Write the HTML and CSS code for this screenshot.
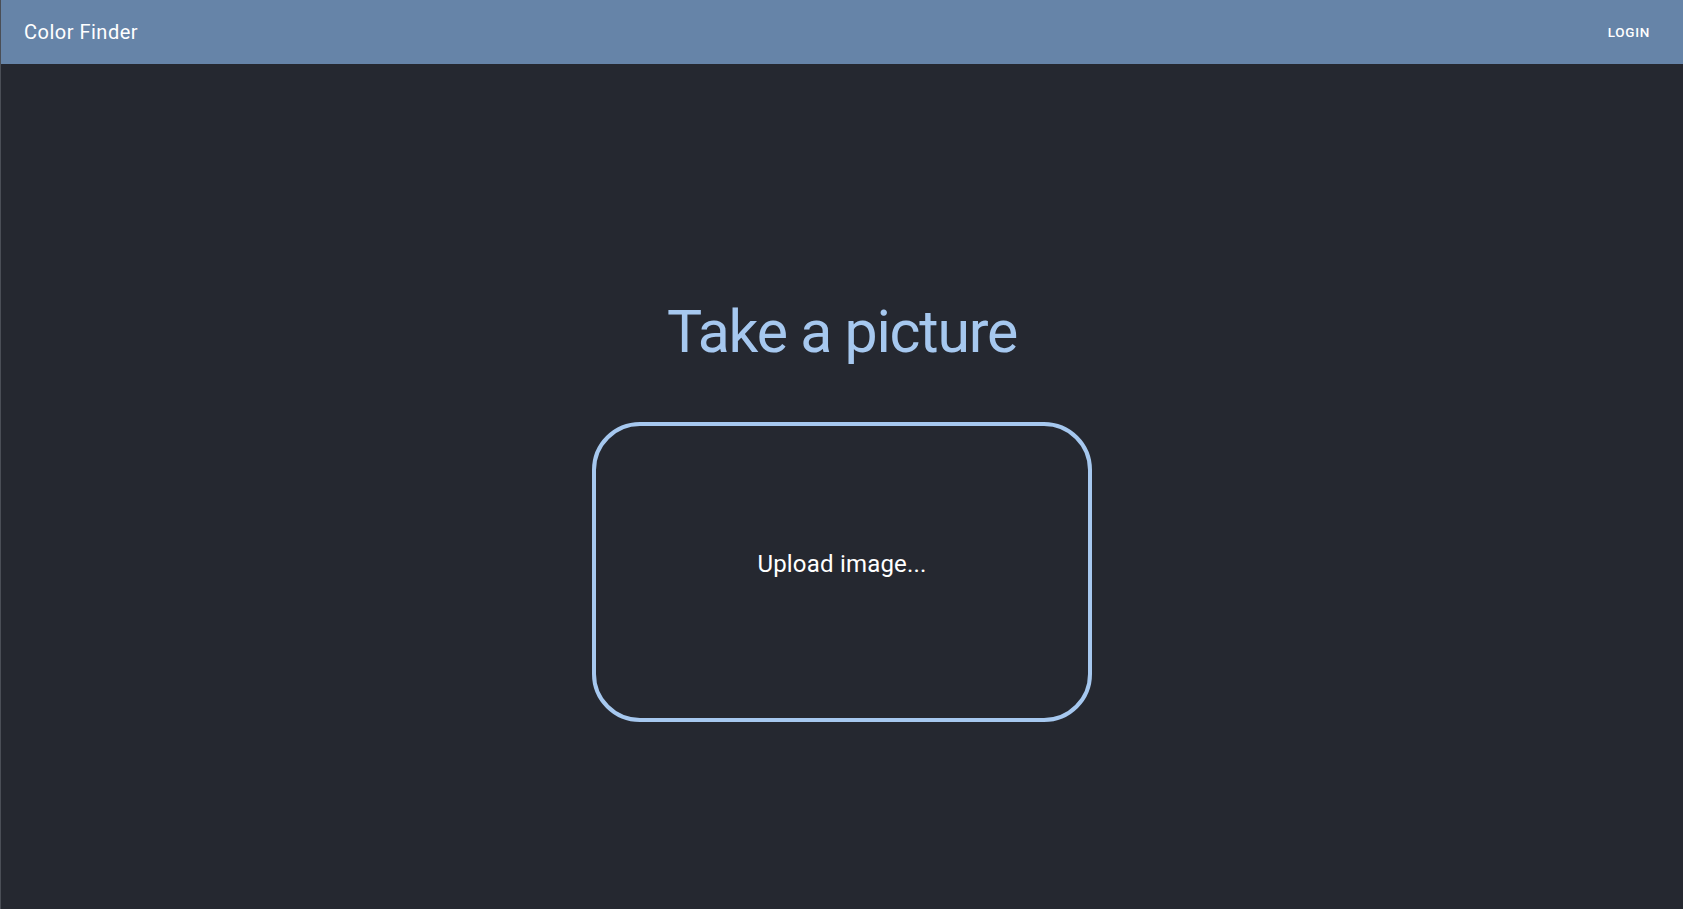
FILE: index.html
```html
<!DOCTYPE html>
<html lang="en">
<head>
<meta charset="utf-8">
<title>Color Finder</title>
<link rel="stylesheet" href="styles.css">
</head>
<body>
<div class="app">
  <header class="appbar">
    <div class="brand">Color Finder</div>
    <button class="login">Login</button>
  </header>
  <main class="main">
    <h2 class="title">Take a picture</h2>
    <label class="upload">
      <span class="upload-text">Upload image...</span>
    </label>
  </main>
</div>
</body>
</html>
```
FILE: styles.css
```css
* { box-sizing: border-box; }
html, body {
  margin: 0;
  padding: 0;
  height: 100%;
}
body {
  background: #252830;
  font-family: Roboto, "Liberation Sans", Arial, sans-serif;
  color: #ffffff;
}
.app {
  min-height: 100vh;
  display: flex;
  flex-direction: column;
  border-left: 1px solid #4a4e56;
}
.appbar {
  height: 64px;
  background: #6684a8;
  display: flex;
  align-items: center;
  justify-content: space-between;
  padding: 0 25px 0 23px;
}
.brand {
  font-size: 20px;
  font-weight: 400;
  letter-spacing: 0.5px;
  color: #ffffff;
}
.login {
  background: transparent;
  border: 0;
  color: #ffffff;
  font-family: inherit;
  font-size: 13.5px;
  font-weight: 500;
  text-transform: uppercase;
  letter-spacing: 0.7px;
  padding: 6px 8px;
  cursor: pointer;
}
.main {
  flex: 1;
  display: flex;
  flex-direction: column;
  align-items: center;
  padding-top: 232px;
}
.title {
  margin: 0 0 54px;
  font-size: 59px;
  font-weight: 400;
  line-height: 72px;
  color: #a6c8ef;
  letter-spacing: -1.2px;
}
.upload {
  width: 500px;
  height: 300px;
  border: 4px solid #a6c8ef;
  border-radius: 48px;
  display: flex;
  align-items: center;
  justify-content: center;
  padding-bottom: 17px;
  cursor: pointer;
}
.upload-text {
  font-size: 24px;
  line-height: 36px;
  letter-spacing: 0.2px;
  color: #ffffff;
}
```
